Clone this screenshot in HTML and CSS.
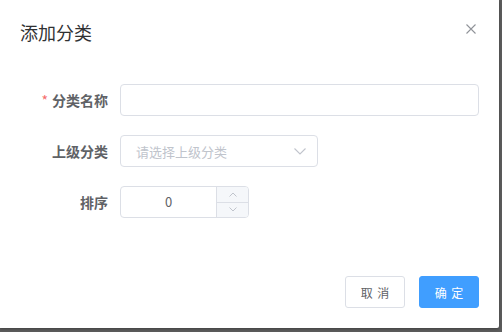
FILE: index.html
```html
<!DOCTYPE html>
<html lang="zh-CN">
<head>
    <meta charset="UTF-8">
    <meta name="viewport" content="width=device-width, initial-scale=1.0">
    <title>添加分类</title>
    <link rel="stylesheet" href="styles.css">
</head>
<body>
    <div class="dialog">
        <div class="dialog-header">
            <span class="dialog-title">添加分类</span>
            <button class="dialog-close" type="button">
                <svg width="10" height="10" viewBox="0 0 10 10">
                    <path d="M0.5 0.5 L9.5 9.5 M9.5 0.5 L0.5 9.5" stroke="#909399" stroke-width="1.1" fill="none"/>
                </svg>
            </button>
        </div>

        <div class="dialog-body">
            <div class="form-item">
                <label class="form-label"><span class="required">*</span>分类名称</label>
                <div class="form-content">
                    <input class="input" type="text">
                </div>
            </div>

            <div class="form-item">
                <label class="form-label">上级分类</label>
                <div class="form-content">
                    <div class="select">
                        <span class="placeholder">请选择上级分类</span>
                        <svg class="select-arrow" width="12" height="7" viewBox="0 0 12 7">
                            <path d="M0.5 0.5 L6 6 L11.5 0.5" stroke="#C0C4CC" stroke-width="1.1" fill="none"/>
                        </svg>
                    </div>
                </div>
            </div>

            <div class="form-item">
                <label class="form-label">排序</label>
                <div class="form-content">
                    <div class="input-number">
                        <span class="number-value">0</span>
                        <div class="number-controls">
                            <span class="number-btn">
                                <svg width="8" height="5" viewBox="0 0 8 5"><path d="M0.5 4.5 L4 1 L7.5 4.5" stroke="#C0C4CC" stroke-width="1" fill="none"/></svg>
                            </span>
                            <span class="number-btn">
                                <svg width="8" height="5" viewBox="0 0 8 5"><path d="M0.5 0.5 L4 4 L7.5 0.5" stroke="#C0C4CC" stroke-width="1" fill="none"/></svg>
                            </span>
                        </div>
                    </div>
                </div>
            </div>
        </div>

        <div class="dialog-footer">
            <button class="btn" type="button">取 消</button>
            <button class="btn btn-primary" type="button">确 定</button>
        </div>
    </div>
</body>
</html>
```

FILE: styles.css
```css
* {
    margin: 0;
    padding: 0;
    box-sizing: border-box;
}

body {
    font-family: "Noto Sans CJK SC", "Noto Sans", sans-serif;
    background: #5c5c5c;
    width: 502px;
    height: 332px;
    overflow: hidden;
}

.dialog {
    width: 499px;
    height: 328px;
    background: #fff;
    border-radius: 0 0 2px 0;
    box-shadow: 0 1px 3px rgba(0, 0, 0, 0.3);
}

.dialog-header {
    position: relative;
    padding: 20px 20px 10px;
}

.dialog-title {
    display: block;
    font-size: 18px;
    line-height: 24px;
    color: #303133;
}

.dialog-close {
    position: absolute;
    top: 24px;
    right: 23px;
    width: 10px;
    height: 10px;
    border: none;
    background: none;
    display: flex;
}

.dialog-body {
    padding: 30px 20px 48px;
    display: flex;
    flex-direction: column;
    gap: 19px;
}

.form-item {
    display: flex;
    height: 32px;
}

.form-label {
    width: 100px;
    padding-right: 12px;
    text-align: right;
    line-height: 32px;
    font-size: 14px;
    font-weight: 700;
    color: #606266;
}

.required {
    color: #F56C6C;
    font-weight: 400;
    margin-right: 4px;
}

.form-content {
    flex: 1;
}

.input {
    display: block;
    width: 100%;
    height: 32px;
    border: 1px solid #DCDFE6;
    border-radius: 4px;
    padding: 0 15px;
    font-size: 13px;
    outline: none;
}

.select {
    display: flex;
    align-items: center;
    justify-content: space-between;
    width: 198px;
    height: 32px;
    border: 1px solid #DCDFE6;
    border-radius: 4px;
    padding: 0 11px 0 15px;
}

.placeholder {
    font-size: 13px;
    color: #C0C4CC;
}

.input-number {
    display: flex;
    width: 129px;
    height: 32px;
    border: 1px solid #DCDFE6;
    border-radius: 4px;
    overflow: hidden;
}

.number-value {
    flex: 1;
    text-align: center;
    line-height: 30px;
    font-size: 13px;
    color: #606266;
}

.number-controls {
    width: 32px;
    display: flex;
    flex-direction: column;
    border-left: 1px solid #DCDFE6;
    background: #F5F7FA;
}

.number-btn {
    flex: 1;
    display: flex;
    align-items: center;
    justify-content: center;
}

.number-btn + .number-btn {
    border-top: 1px solid #DCDFE6;
}

.dialog-footer {
    padding: 10px 20px 20px;
    display: flex;
    justify-content: flex-end;
    gap: 14px;
}

.btn {
    height: 32px;
    padding: 0;
    font-family: inherit;
    font-size: 12px;
    word-spacing: 2px;
    color: #606266;
    background: #fff;
    border: 1px solid #DCDFE6;
    border-radius: 3px;
    width: 60px;
}

.btn-primary {
    color: #fff;
    background: #409EFF;
    border-color: #409EFF;
}
```
